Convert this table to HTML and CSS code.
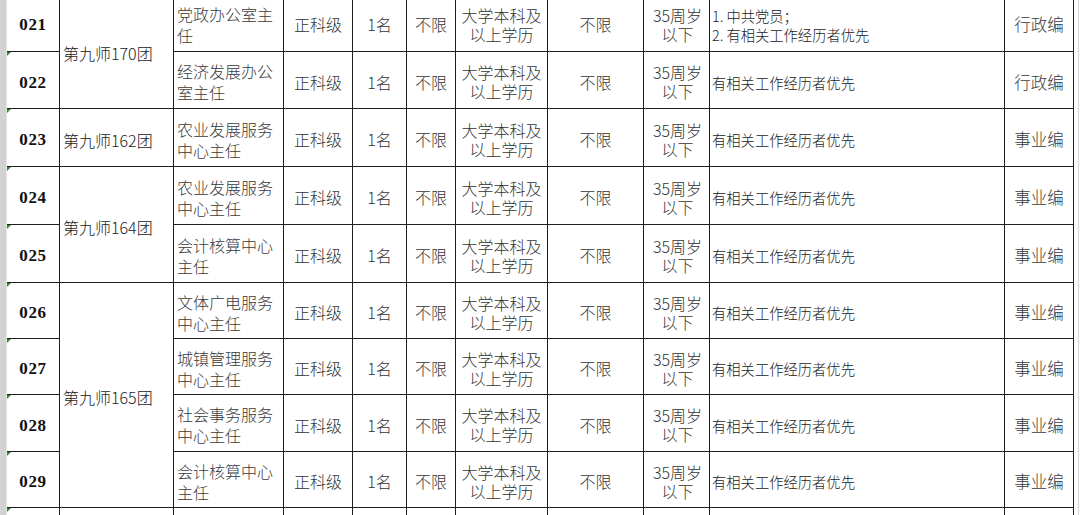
FILE: index.html
```html
<!DOCTYPE html>
<html lang="zh-CN">
<head>
<meta charset="utf-8">
<title>岗位表</title>
<link rel="stylesheet" href="styles.css">
</head>
<body>
<div class="sheet">
  <div class="strip"></div>
  <div class="grid">
    <!-- row 1 -->
    <div class="c id r1">021</div>
    <div class="c unit r1 span2">第九师170团</div>
    <div class="c pos r1">党政办公室主任</div>
    <div class="c mid r1">正科级</div>
    <div class="c mid r1">1名</div>
    <div class="c mid r1">不限</div>
    <div class="c mid edu r1">大学本科及<br>以上学历</div>
    <div class="c mid r1">不限</div>
    <div class="c mid age r1">35周岁<br>以下</div>
    <div class="c req r1">1. 中共党员；<br>2. 有相关工作经历者优先</div>
    <div class="c kind r1">行政编</div>
    <!-- row 2 -->
    <div class="c id r2">022</div>
    <div class="c pos r2">经济发展办公室主任</div>
    <div class="c mid r2">正科级</div>
    <div class="c mid r2">1名</div>
    <div class="c mid r2">不限</div>
    <div class="c mid edu r2">大学本科及<br>以上学历</div>
    <div class="c mid r2">不限</div>
    <div class="c mid age r2">35周岁<br>以下</div>
    <div class="c req r2">有相关工作经历者优先</div>
    <div class="c kind r2">行政编</div>
    <!-- row 3 -->
    <div class="c id r3">023</div>
    <div class="c unit r3">第九师162团</div>
    <div class="c pos r3">农业发展服务中心主任</div>
    <div class="c mid r3">正科级</div>
    <div class="c mid r3">1名</div>
    <div class="c mid r3">不限</div>
    <div class="c mid edu r3">大学本科及<br>以上学历</div>
    <div class="c mid r3">不限</div>
    <div class="c mid age r3">35周岁<br>以下</div>
    <div class="c req r3">有相关工作经历者优先</div>
    <div class="c kind r3">事业编</div>
    <!-- row 4 -->
    <div class="c id r4">024</div>
    <div class="c unit r4 span2">第九师164团</div>
    <div class="c pos r4">农业发展服务中心主任</div>
    <div class="c mid r4">正科级</div>
    <div class="c mid r4">1名</div>
    <div class="c mid r4">不限</div>
    <div class="c mid edu r4">大学本科及<br>以上学历</div>
    <div class="c mid r4">不限</div>
    <div class="c mid age r4">35周岁<br>以下</div>
    <div class="c req r4">有相关工作经历者优先</div>
    <div class="c kind r4">事业编</div>
    <!-- row 5 -->
    <div class="c id r5">025</div>
    <div class="c pos r5">会计核算中心主任</div>
    <div class="c mid r5">正科级</div>
    <div class="c mid r5">1名</div>
    <div class="c mid r5">不限</div>
    <div class="c mid edu r5">大学本科及<br>以上学历</div>
    <div class="c mid r5">不限</div>
    <div class="c mid age r5">35周岁<br>以下</div>
    <div class="c req r5">有相关工作经历者优先</div>
    <div class="c kind r5">事业编</div>
    <!-- row 6 -->
    <div class="c id r6">026</div>
    <div class="c unit r6 span4">第九师165团</div>
    <div class="c pos r6">文体广电服务中心主任</div>
    <div class="c mid r6">正科级</div>
    <div class="c mid r6">1名</div>
    <div class="c mid r6">不限</div>
    <div class="c mid edu r6">大学本科及<br>以上学历</div>
    <div class="c mid r6">不限</div>
    <div class="c mid age r6">35周岁<br>以下</div>
    <div class="c req r6">有相关工作经历者优先</div>
    <div class="c kind r6">事业编</div>
    <!-- row 7 -->
    <div class="c id r7">027</div>
    <div class="c pos r7">城镇管理服务中心主任</div>
    <div class="c mid r7">正科级</div>
    <div class="c mid r7">1名</div>
    <div class="c mid r7">不限</div>
    <div class="c mid edu r7">大学本科及<br>以上学历</div>
    <div class="c mid r7">不限</div>
    <div class="c mid age r7">35周岁<br>以下</div>
    <div class="c req r7">有相关工作经历者优先</div>
    <div class="c kind r7">事业编</div>
    <!-- row 8 -->
    <div class="c id r8">028</div>
    <div class="c pos r8">社会事务服务中心主任</div>
    <div class="c mid r8">正科级</div>
    <div class="c mid r8">1名</div>
    <div class="c mid r8">不限</div>
    <div class="c mid edu r8">大学本科及<br>以上学历</div>
    <div class="c mid r8">不限</div>
    <div class="c mid age r8">35周岁<br>以下</div>
    <div class="c req r8">有相关工作经历者优先</div>
    <div class="c kind r8">事业编</div>
    <!-- row 9 -->
    <div class="c id r9">029</div>
    <div class="c pos r9">会计核算中心主任</div>
    <div class="c mid r9">正科级</div>
    <div class="c mid r9">1名</div>
    <div class="c mid r9">不限</div>
    <div class="c mid edu r9">大学本科及<br>以上学历</div>
    <div class="c mid r9">不限</div>
    <div class="c mid age r9">35周岁<br>以下</div>
    <div class="c req r9">有相关工作经历者优先</div>
    <div class="c kind r9">事业编</div>
    <!-- row 10 (cut off) -->
    <div class="c id r10"></div>
    <div class="c unit r10"></div>
    <div class="c pos r10"></div>
    <div class="c mid r10"></div>
    <div class="c mid r10"></div>
    <div class="c mid r10"></div>
    <div class="c mid r10"></div>
    <div class="c mid r10"></div>
    <div class="c mid r10"></div>
    <div class="c req r10"></div>
    <div class="c kind r10"></div>
  </div>
  <div class="filler"></div>
</div>
</body>
</html>
```

FILE: styles.css
```css
html, body {
  margin: 0;
  padding: 0;
  background: #ffffff;
  overflow: hidden;
}

.sheet {
  display: flex;
  align-items: stretch;
  width: 1080px;
  height: 515px;
  overflow: hidden;
}

.strip {
  flex: 0 0 6px;
  background: #d2d2d2;
  border-right: 1px solid #e4e4e4;
}

.grid {
  flex: 0 0 auto;
  margin-top: -6px;
  display: grid;
  grid-template-columns: 52px 113px 109px 68px 53px 48px 91px 95px 65px 294px 68px;
  grid-template-rows: 57px 56px 57px 57px 57px 55px 55px 56px 55px 60px;
  gap: 1px;
  background: #1e1e1e;
  border-right: 1px solid #1e1e1e;
  align-self: flex-start;
}

.filler {
  flex: 0 0 4px;
  border-right: 1px solid #d4d4d4;
}

.c {
  background: #ffffff;
  display: flex;
  align-items: center;
  padding-top: 4px;
  font-family: "Noto Sans CJK SC", "Noto Sans", sans-serif;
  font-weight: 300;
  font-size: 16px;
  line-height: 21px;
  color: #333333;
  overflow: hidden;
}

.id {
  position: relative;
  justify-content: center;
  font-family: "Liberation Serif", "DejaVu Serif", serif;
  font-weight: bold;
  font-size: 17px;
  letter-spacing: 0.6px;
  color: #111111;
}

.id::before {
  content: "";
  position: absolute;
  left: 0;
  top: 0;
  width: 0;
  height: 0;
  border-top: 4px solid #2e8b2e;
  border-right: 4px solid transparent;
}

.unit {
  padding-left: 3px;
  padding-top: 5px;
  font-size: 16px;
  color: #222222;
}

.span2 { grid-row: span 2; }
.span4 { grid-row: span 4; }

.pos {
  padding-left: 3px;
  padding-right: 6px;
  line-height: 21px;
  color: #3a3a3a;
}

.mid {
  justify-content: center;
  text-align: center;
}

.edu {
  line-height: 19px;
}

.age {
  line-height: 19px;
  padding-left: 2px;
}

.req {
  padding-left: 2px;
  font-size: 14.3px;
  line-height: 19px;
  color: #222222;
}

.kind {
  justify-content: center;
  font-size: 16.5px;
  color: #3a3a3a;
}
```
